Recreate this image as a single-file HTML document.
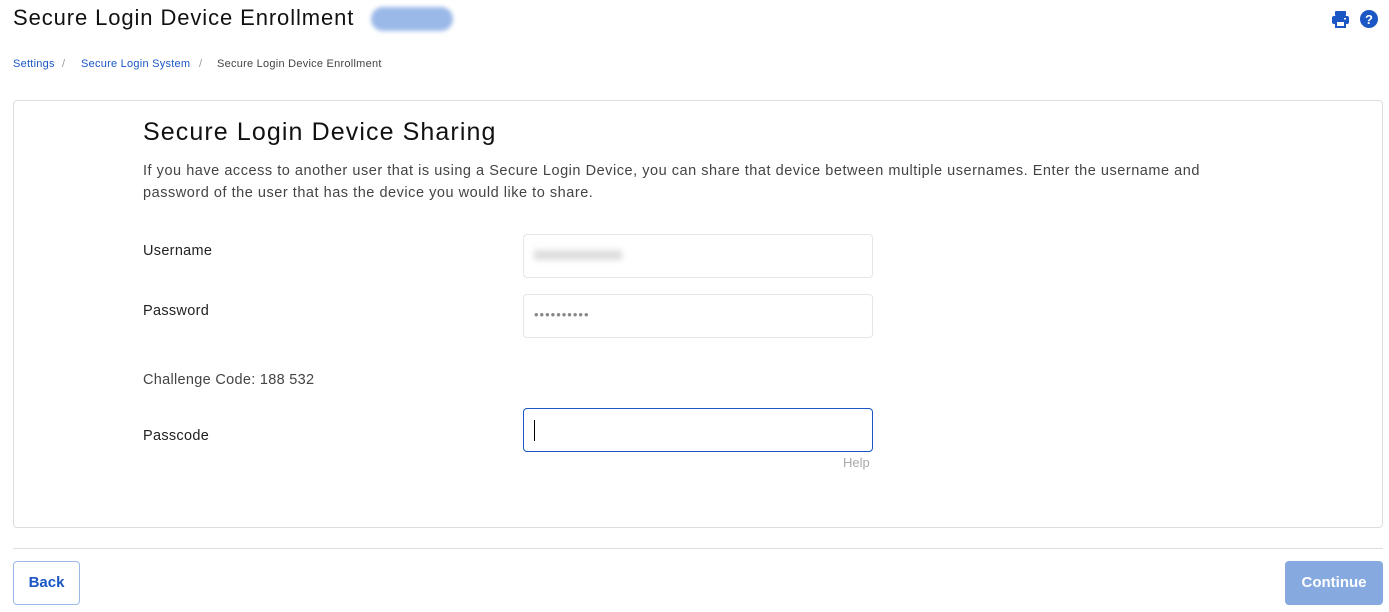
<!DOCTYPE html>
<html><head><style>
*{box-sizing:border-box;margin:0;padding:0}
body{width:1389px;height:612px;background:#fff;font-family:"Liberation Sans",sans-serif;color:#222;position:relative;overflow:hidden}
.abs{position:absolute}
h1{position:absolute;left:13px;top:5px;font-size:22px;font-weight:normal;color:#111;letter-spacing:0.9px}
.pill{left:371px;top:7px;width:82px;height:24px;border-radius:12px;background:#9bb9e8;filter:blur(2px)}
.bc{top:58px;font-size:11px;color:#1a56c4;letter-spacing:0.25px}
.card{left:13px;top:100px;width:1370px;height:428px;border:1px solid #ddd;border-radius:4px}
h2{position:absolute;left:143px;top:118px;font-size:25px;font-weight:normal;color:#111;letter-spacing:1.1px}
p.d{position:absolute;left:143px;top:160px;width:1100px;font-size:14.5px;line-height:22px;color:#444;letter-spacing:0.53px;white-space:nowrap}
.lbl{left:143px;font-size:14.5px;color:#222;letter-spacing:0.3px}
.in{left:523px;width:350px;height:44px;border:1px solid #e6e6e6;border-radius:4px}
</style></head><body>
<h1>Secure Login Device Enrollment</h1>
<div class="abs pill"></div>
<svg class="abs" style="left:1331px;top:10px" width="19" height="18" viewBox="0 0 19 18"><rect x="4" y="1" width="11" height="5" rx="1" fill="#1a56c4"/><rect x="1" y="6" width="17" height="8" rx="2" fill="#1a56c4"/><rect x="5" y="11" width="9" height="6" fill="#fff" stroke="#1a56c4" stroke-width="2"/><rect x="13" y="8" width="2" height="1.5" fill="#fff"/></svg>
<svg class="abs" style="left:1360px;top:10px" width="18" height="18" viewBox="0 0 18 18"><circle cx="9" cy="9" r="9" fill="#1a56c4"/><text x="9" y="14" text-anchor="middle" font-size="13" font-weight="bold" fill="#fff" font-family="Liberation Sans">?</text></svg>
<div class="abs bc" style="left:13px">Settings</div>
<div class="abs bc" style="left:62px;color:#999">/</div>
<div class="abs bc" style="left:81px">Secure Login System</div>
<div class="abs bc" style="left:199px;color:#999">/</div>
<div class="abs bc" style="left:217px;color:#444">Secure Login Device Enrollment</div>
<div class="abs card"></div>
<h2>Secure Login Device Sharing</h2>
<p class="d">If you have access to another user that is using a Secure Login Device, you can share that device between multiple usernames. Enter the username and<br>password of the user that has the device you would like to share.</p>
<div class="abs lbl" style="top:243px">Username</div>
<div class="abs in" style="top:234px"><div style="position:absolute;left:10px;top:15px;width:88px;height:10px;background:#ddd;filter:blur(3px)"></div></div>
<div class="abs lbl" style="top:303px">Password</div>
<div class="abs in" style="top:294px;font-size:13px;color:#888;padding:12px 10px;letter-spacing:1px">••••••••••</div>
<div class="abs lbl" style="top:372px;color:#444">Challenge Code: 188 532</div>
<div class="abs lbl" style="top:428px">Passcode</div>
<div class="abs in" style="top:408px;border:1.5px solid #1a56c4"><div style="position:absolute;left:10px;top:11px;width:1px;height:21px;background:#000"></div></div>
<div class="abs" style="left:843px;top:455px;font-size:13px;color:#aaa">Help</div>
<div class="abs" style="left:13px;top:548px;width:1370px;height:1px;background:#ddd"></div>
<div class="abs" style="left:13px;top:561px;width:67px;height:44px;border:1px solid #9bb9e8;border-radius:4px;color:#1a56c4;font-size:15px;font-weight:bold;text-align:center;line-height:42px">Back</div>
<div class="abs" style="left:1285px;top:561px;width:98px;height:44px;background:#86a9e0;border-radius:4px;color:#fff;font-size:15px;font-weight:bold;text-align:center;line-height:44px">Continue</div>
</body></html>
